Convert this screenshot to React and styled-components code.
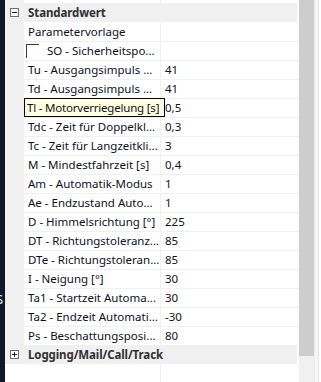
import React from "react";
import styled, { createGlobalStyle } from "styled-components";

const GlobalStyle = createGlobalStyle`
  html, body {
    margin: 0;
    padding: 0;
    background: #ffffff;
  }
  body {
    font-family: "Segoe UI", "Noto Sans", "Liberation Sans", sans-serif;
    font-size: 11.5px;
  }
`;

const Screen = styled.div`
  display: flex;
  width: 321px;
  height: 382px;
  overflow: hidden;
`;

const DarkEdge = styled.div`
  width: 5px;
  flex-shrink: 0;
  background: #0c1a2a;
  overflow: hidden;
  padding-top: 291px;
  box-sizing: border-box;
  color: #e8eef5;
  font-size: 13px;
  line-height: 16px;
  text-indent: -4px;
`;

const Grid = styled.div`
  width: 294px;
  flex-shrink: 0;
  display: flex;
  flex-direction: column;
  background: #ffffff;
`;

const Row = styled.div`
  position: relative;
  display: grid;
  grid-template-columns: 19px 136px 1px 136px 2px;
  height: ${(p) => p.$h || 19}px;
  box-sizing: border-box;
  border-top: ${(p) => (p.$line ? "1px solid #f0f0f0" : "none")};
  flex-shrink: 0;
`;

const Gutter = styled.div`
  background: #f0f0f0;
`;

const Divider = styled.div`
  background: #f0f0f0;
`;

const Name = styled.div`
  display: flex;
  align-items: center;
  padding-left: ${(p) => (p.$check ? 2 : 4)}px;
  gap: 8px;
  color: #10101c;
  white-space: nowrap;
  overflow: hidden;
  line-height: 18px;
`;

const Value = styled.div`
  display: flex;
  align-items: center;
  padding-left: 4px;
  color: #10101c;
  white-space: nowrap;
  line-height: 18px;
`;

const Category = styled.div`
  display: flex;
  align-items: center;
  height: 19px;
  flex-shrink: 0;
  background: #f0f0f0;
  margin-right: 2px;
`;

const CategoryGutter = styled.div`
  width: 19px;
  display: flex;
  align-items: center;
  justify-content: center;
`;

const CategoryLabel = styled.div`
  padding-left: 4px;
  font-weight: 700;
  color: #303030;
  white-space: nowrap;
  letter-spacing: -0.1px;
`;

const CheckBox = styled.span`
  width: 13px;
  height: 14px;
  box-sizing: border-box;
  border-top: 1px solid #3a3a3a;
  border-left: 1px solid #3a3a3a;
  flex-shrink: 0;
`;

const Tip = styled.div`
  position: absolute;
  left: 19px;
  top: -1px;
  width: 141px;
  height: 19px;
  box-sizing: border-box;
  border: 1px solid #000000;
  background: #ffffe1;
  padding-left: 2px;
  line-height: 17px;
  letter-spacing: -0.2px;
  color: #10101c;
  white-space: nowrap;
  overflow: hidden;
  z-index: 2;
`;

const Filler = styled.div`
  flex: 1;
  display: grid;
  grid-template-columns: 155px 1px 1fr;
`;

const Scrollbar = styled.div`
  width: 15px;
  flex-shrink: 0;
  display: flex;
  flex-direction: column;
  background: #f0f0f0;
`;

const Thumb = styled.div`
  height: 356px;
  background: #cdcdcd;
`;

const RightEdge = styled.div`
  width: 7px;
  flex-shrink: 0;
  box-sizing: border-box;
  background: #f6f6f6;
  border-left: 1px solid #ebebeb;
  border-right: 2px solid #ffffff;
  box-shadow: inset -1px 0 0 #e4e4e4;
`;

function Expander({ open }) {
  return (
    <svg width="9" height="9" viewBox="0 0 9 9">
      <rect x="0.5" y="0.5" width="8" height="8" fill="#ffffff" stroke="#6d6d6d" />
      <line x1="2" y1="4.5" x2="7" y2="4.5" stroke="#1e1e1e" />
      {!open && <line x1="4.5" y1="2" x2="4.5" y2="7" stroke="#1e1e1e" />}
    </svg>
  );
}

const rows = [
  { name: "Parametervorlage", value: "" },
  { name: "SO - Sicherheitspo...", value: "", check: true },
  { name: "Tu - Ausgangsimpuls ...", value: "41" },
  { name: "Td - Ausgangsimpuls ...", value: "41" },
  { name: "Tl - Motorverriegelung [s]", value: "0,5", tip: true },
  { name: "Tdc - Zeit für Doppelkl...", value: "0,3" },
  { name: "Tc - Zeit für Langzeitkli...", value: "3" },
  { name: "M - Mindestfahrzeit [s]", value: "0,4" },
  { name: "Am - Automatik-Modus", value: "1" },
  { name: "Ae - Endzustand Auto...", value: "1" },
  { name: "D - Himmelsrichtung [°]", value: "225" },
  { name: "DT - Richtungstoleranz...", value: "85" },
  { name: "DTe - Richtungstoleran...", value: "85" },
  { name: "I - Neigung [°]", value: "30" },
  { name: "Ta1 - Startzeit Automa...", value: "30" },
  { name: "Ta2 - Endzeit Automati...", value: "-30" },
  { name: "Ps - Beschattungsposi...", value: "80" },
];

export default function App() {
  return (
    <>
      <GlobalStyle />
      <Screen>
        <DarkEdge>S</DarkEdge>
        <Grid>
          <Row $h={3}>
            <Gutter />
            <div />
            <Divider />
            <div />
            <div />
          </Row>
          <Category>
            <CategoryGutter>
              <Expander open />
            </CategoryGutter>
            <CategoryLabel>Standardwert</CategoryLabel>
          </Category>
          {rows.map((r, i) => (
            <Row key={i} $line={i > 0}>
              <Gutter />
              <Name $check={r.check}>
                {r.check && <CheckBox />}
                {!r.tip && r.name}
              </Name>
              <Divider />
              <Value>{r.value}</Value>
              <div />
              {r.tip && <Tip>{r.name}</Tip>}
            </Row>
          ))}
          <Category>
            <CategoryGutter>
              <Expander />
            </CategoryGutter>
            <CategoryLabel>Logging/Mail/Call/Track</CategoryLabel>
          </Category>
          <Filler>
            <div />
            <Divider />
            <div />
          </Filler>
        </Grid>
        <Scrollbar>
          <Thumb />
        </Scrollbar>
        <RightEdge />
      </Screen>
    </>
  );
}
